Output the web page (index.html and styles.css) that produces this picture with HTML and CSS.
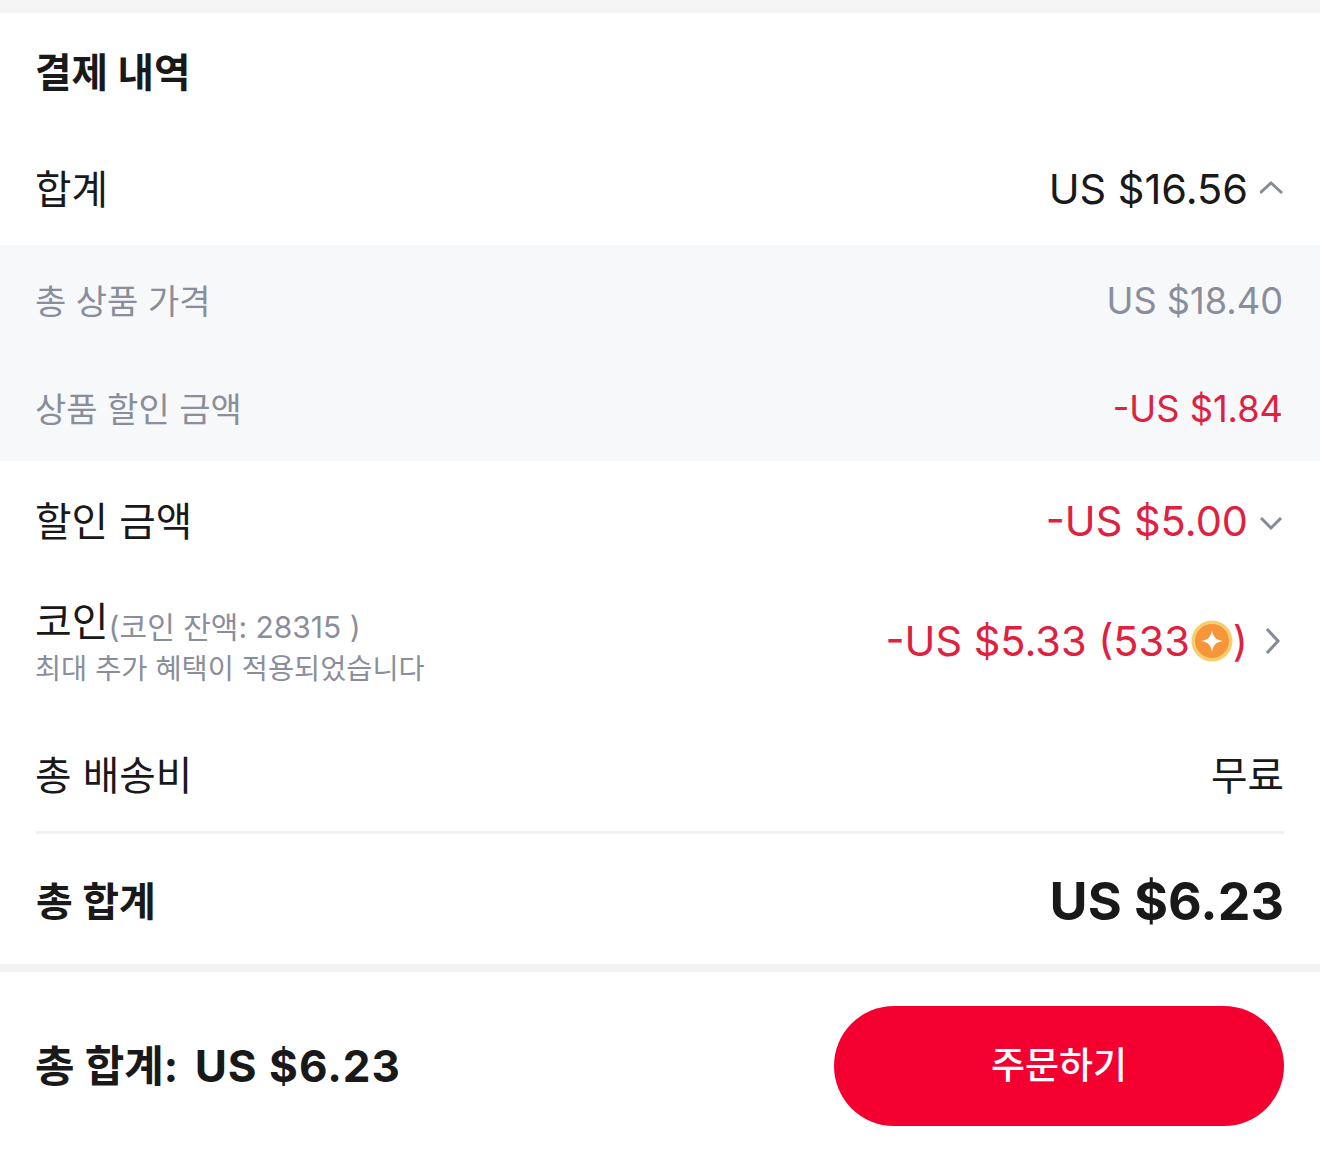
FILE: index.html
```html
<!DOCTYPE html>
<html lang="ko">
<head>
<meta name="viewport" content="width=device-width, initial-scale=1">
<link rel="stylesheet" href="styles.css">
</head>
<body>

<div class="gap-top"></div>

<div class="summary">
  <h2 class="title">결제 내역</h2>

  <div class="row row-total">
    <span class="label">합계</span>
    <span class="value">US $16.56
      <svg class="arrow" width="24" height="24" viewBox="0 0 24 24"><path d="M0 16 L11 6 L22 16"/></svg>
    </span>
  </div>

  <div class="detail">
    <div class="detail-row">
      <span>총 상품 가격</span>
      <span class="detail-value">US $18.40</span>
    </div>
    <div class="detail-row">
      <span>상품 할인 금액</span>
      <span class="detail-value red">-US $1.84</span>
    </div>
  </div>

  <div class="row row-discount">
    <span class="label">할인 금액</span>
    <span class="value red">-US $5.00
      <svg class="arrow" width="24" height="24" viewBox="0 0 24 24"><path d="M1 9 L11 19 L21 9"/></svg>
    </span>
  </div>

  <div class="row row-coin">
    <div class="coin-text">
      <div class="coin-name">코인<span class="coin-balance">(코인 잔액: 28315 )</span></div>
      <div class="coin-note">최대 추가 혜택이 적용되었습니다</div>
    </div>
    <span class="value red">-US $5.33 (533<svg class="coin" width="42" height="42" viewBox="0 0 42 42"><circle cx="21" cy="21" r="20.500" fill="#f6cf6c"/><circle cx="21" cy="21" r="17" fill="#f7953a"/><path d="M21 10 C22 17 25 20 32 21 C25 22 22 25 21 32 C20 25 17 22 10 21 C17 20 20 17 21 10 Z" fill="#fff"/></svg>)
      <svg class="arrow arrow-right" width="24" height="30" viewBox="0 0 24 30"><path d="M7 3 L18 15 L7 27"/></svg>
    </span>
  </div>

  <div class="row row-shipping">
    <span class="label">총 배송비</span>
    <span class="label">무료</span>
  </div>

  <div class="grand">
    <span class="grand-label">총 합계</span>
    <span class="grand-value">US $6.23</span>
  </div>
</div>

<div class="footer">
  <div class="footer-total"><span class="footer-label">총 합계:</span> <b>US $6.23</b></div>
  <div class="order-btn">주문하기</div>
</div>

</body>
</html>
```

FILE: styles.css
```css
* {
  box-sizing: border-box;
  font-family: Inter, "Noto Sans CJK KR", sans-serif;
}

body {
  margin: 0;
  background: #fff;
  color: #191919;
}

.gap-top {
  height: 13px;
  background: #f5f5f5;
}

.summary {
  height: 959px;
  border-bottom: 8px solid #f2f2f2;
}

.title {
  margin: 0;
  padding: 2px 35px 0;
  height: 118px;
  line-height: 116px;
  font-size: 39.700px;
  font-weight: 700;
}

/* Rows */
.row {
  display: flex;
  justify-content: space-between;
  align-items: center;
  padding: 0 36px 0 35px;
}

.row-total {
  height: 114px;
}

.row-discount {
  height: 118px;
}

.row-coin {
  height: 127px;
}

.row-shipping {
  height: 125px;
  padding-top: 11px;
}

.label {
  font-size: 39.700px;
  padding-bottom: 4px;
}

.value {
  display: flex;
  align-items: center;
  font-size: 41.500px;
  padding-top: 2px;
}

.red {
  color: #e0203f;
}

.arrow {
  margin-left: 12px;
  fill: none;
  stroke: #858a99;
  stroke-width: 3;
}

/* Grey panel under the total */
.detail {
  background: #f7f8fa;
  height: 216px;
  color: #8a8e9b;
  font-size: 34px;
}

.detail-row {
  display: flex;
  justify-content: space-between;
  align-items: center;
  height: 108px;
  padding: 0 37px 0 35px;
}

.detail-value {
  font-size: 36.200px;
  padding-top: 4px;
}

.detail-value.red {
  color: #e0203f;
}

/* Coin row */
.coin-text {
  font-size: 40px;
}

.coin-name {
  line-height: 46px;
}

.coin-balance {
  font-size: 30px;
  color: #8a8e9b;
  vertical-align: -2px;
}

.coin-note {
  margin-top: 1px;
  font-size: 28.400px;
  line-height: 36px;
  color: #8a8e9b;
}

.coin {
  margin-left: 1px;
}

.row-coin .value {
  padding-top: 0;
  padding-bottom: 4px;
}

/* Grand total */
.grand {
  display: flex;
  justify-content: space-between;
  align-items: center;
  margin: 0 36px;
  height: 133px;
  border-top: 3px solid #f2f2f2;
}

.grand-label {
  font-size: 40px;
  font-weight: 700;
}

.grand-value {
  font-size: 52px;
  font-weight: 700;
  padding-top: 4px;
}

/* Bottom bar */
.footer {
  display: flex;
  justify-content: space-between;
  align-items: center;
  height: 188px;
  padding: 0 36px 0 35px;
}

.footer-label {
  font-size: 43px;
}

.footer-total {
  font-size: 44px;
  font-weight: 700;
  padding-bottom: 6px;
}

.footer-total b {
  margin-left: 6px;
  font-weight: 700;
  letter-spacing: 1px;
}

.order-btn {
  width: 450px;
  height: 120px;
  border-radius: 60px;
  background: #f30031;
  color: #fff;
  font-size: 37px;
  font-weight: 500;
  line-height: 120px;
  text-align: center;
}
```
